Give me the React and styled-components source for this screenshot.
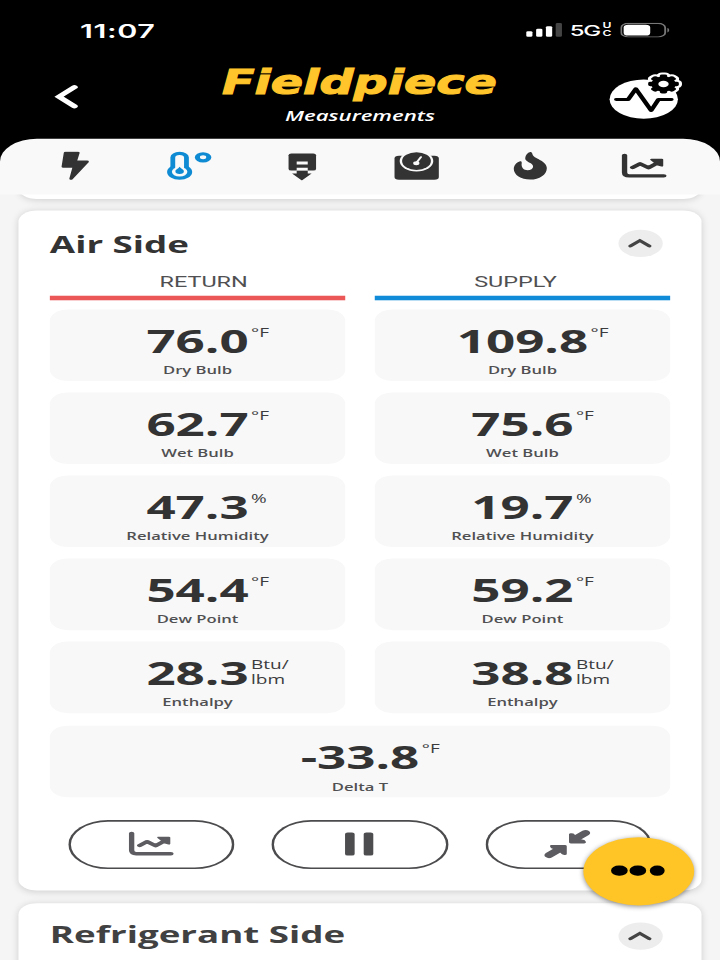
import React from "react";
import styled, { createGlobalStyle } from "styled-components";

const GlobalStyle = createGlobalStyle`
  body {
    margin: 0;
    background: #f5f5f5;
    overflow: hidden;
  }
  * {
    box-sizing: border-box;
  }
`;

const Viewport = styled.div`
  width: 720px;
  height: 960px;
  overflow: hidden;
`;

// phone layout is 390x844, stretched to fill the window
const Phone = styled.div`
  position: relative;
  width: 390px;
  height: 844px;
  overflow: hidden;
  background: #f5f5f5;
  color: #333334;
  font-family: "Open Sans", "Noto Sans", sans-serif;
  transform: scale(1.84615, 1.13744);
  transform-origin: 0 0;
`;

const Header = styled.header`
  height: 142px;
  background: #000;
  color: #fff;
`;

const StatusBar = styled.div`
  height: 52px;
  display: flex;
  justify-content: space-between;
  align-items: center;
  padding: 0 26.8px 0 43.4px;
`;

const Time = styled.span`
  padding-top: 1px;
  font-family: Inter, sans-serif;
  font-size: 16.5px;
  font-weight: 600;
  letter-spacing: 0.3px;
`;

const StatusIcons = styled.div`
  display: flex;
  align-items: center;
`;

const Network = styled.span`
  margin-left: 3.8px;
  padding-top: 1px;
  font-family: Inter, sans-serif;
  font-size: 13px;
  font-weight: 500;
  line-height: 16px;
  letter-spacing: -0.7px;
`;

const NetworkSub = styled.span`
  width: 5px;
  margin: 1px 4.8px 0 1.4px;
  font-family: Inter, sans-serif;
  font-size: 6.6px;
  font-weight: 600;
  line-height: 6.6px;
  white-space: pre-line;
`;

const NavRow = styled.div`
  height: 70px;
  display: grid;
  grid-template-columns: 82px 1fr 82px;
`;

const BackButton = styled.div`
  padding: 21px 0 0 28px;
`;

const Brand = styled.div`
  display: flex;
  flex-direction: column;
  align-items: center;
`;

const Logo = styled.div`
  height: 44px;
  padding-top: 4.4px;
  color: #ffc52b;
  font-family: "DejaVu Sans", sans-serif;
  font-size: 29px;
  font-weight: 700;
  font-style: italic;
  line-height: 34px;
  white-space: nowrap;
  -webkit-text-stroke: 0.9px #ffc52b;
  transform: scaleX(0.89);
`;

const Subtitle = styled.div`
  font-size: 12px;
  font-weight: 600;
  font-style: italic;
  line-height: 14px;
  margin-top: -1px;
`;

const LiveButton = styled.div`
  padding: 11px 0 0 21px;
`;

const TabBar = styled.nav`
  position: relative;
  z-index: 1;
  height: 48.6px;
  margin-top: -19.8px;
  padding: 0 10px 1.2px;
  display: flex;
  align-items: center;
  background: #f9f9f9;
  border-radius: 20px 20px 0 0;
`;

const Tab = styled.div`
  flex: 1;
  display: flex;
  justify-content: center;
  color: ${(props) => (props.$active ? "#0f8bd4" : "#333334")};
`;

const TabCard = styled.div`
  height: 20px;
  margin: -15.8px 10px 9.8px;
  background: #fff;
  border-radius: 10px;
  box-shadow: 0 1px 5px rgba(0, 0, 0, 0.15);
`;

const Card = styled.section`
  margin: 0 10px 10.8px;
  padding: 17px 17px 19px;
  background: #fff;
  border-radius: 10px;
  box-shadow: 0 1px 5px rgba(0, 0, 0, 0.15);
`;

const CardHeader = styled.div`
  height: 24px;
  display: flex;
  align-items: center;
  justify-content: space-between;
  padding-right: 4px;
`;

const CardTitle = styled.h2`
  margin: ${(props) => (props.$muted ? "-2px 0 0" : "1.4px 0 0")};
  font-size: 19.9px;
  font-weight: 700;
  line-height: 24px;
  color: ${(props) => (props.$muted ? "#414142" : "#333334")};
`;

const Collapse = styled.div`
  width: 24px;
  height: 24px;
  display: flex;
  align-items: center;
  justify-content: center;
  border-radius: 50%;
  background: #ededed;
`;

const Columns = styled.div`
  display: grid;
  grid-template-columns: 1fr 1fr;
  column-gap: 16px;
  row-gap: 9.7px;
`;

const ColumnHead = styled.div`
  margin-top: 15.4px;
  padding: ${(props) => (props.$side === "return" ? "0 0 0 6.6px" : "0 7.6px 0 0")};
  height: 18.4px;
  font-family: Roboto, sans-serif;
  font-size: 12.7px;
  line-height: 14.6px;
  text-align: center;
  color: #505052;
`;

const HeadRow = styled.div`
  display: grid;
  grid-template-columns: 1fr 1fr;
  column-gap: 16px;
  margin-bottom: 8.2px;
`;

const Bar = styled.div`
  height: 4.4px;
  background: ${(props) => props.$color};
`;

const Tile = styled.div`
  grid-column: ${(props) => (props.$wide ? "1 / -1" : "auto")};
  height: 63.3px;
  margin-top: ${(props) => (props.$wide ? "0.8px" : "0")};
  padding-top: 12.9px;
  background: #f8f8f8;
  border-radius: 10px;
`;

const Reading = styled.div`
  display: grid;
  grid-template-columns: 1fr auto 1fr;
  height: 28px;
`;

const Value = styled.span`
  grid-column: 2;
  font-size: 27.7px;
  font-weight: 700;
  line-height: 28px;
`;

const Unit = styled.span`
  padding: 1.1px 0 0 1.3px;
  font-size: 10.3px;
  font-weight: 500;
  line-height: 13.2px;
  white-space: pre-line;
  color: #3c3c3e;
`;

const Label = styled.div`
  margin-top: 7.4px;
  font-size: 9px;
  font-weight: 600;
  line-height: 12px;
  text-align: center;
  color: #505052;
`;

const Actions = styled.div`
  display: flex;
  gap: 20.1px;
  padding-left: 10.3px;
  margin-top: 19.5px;
`;

const ActionButton = styled.div`
  width: ${(props) => props.$width}px;
  height: 43.5px;
  display: flex;
  align-items: center;
  justify-content: center;
  padding-right: 0.8px;
  border-radius: 22px;
  box-shadow: inset 0 0 0 1.4px #4b4b4d;
  color: #5c5c61;
`;

const Fab = styled.div`
  position: absolute;
  left: 315.7px;
  top: 735.5px;
  z-index: 2;
  width: 60.5px;
  height: 60.5px;
  display: flex;
  align-items: center;
  justify-content: center;
  gap: 1.8px;
  padding-right: 0.4px;
  border-radius: 50%;
  background: #ffc527;
  box-shadow: 0 1px 4px rgba(0, 0, 0, 0.45);
`;

const Dot = styled.span`
  width: 8.5px;
  height: 8.8px;
  border-radius: 50%;
  background: #000;
`;

const SignalIcon = () => (
  <svg width="20" height="13" viewBox="0 0 20 13" fill="#fff">
    <rect x="0" y="7.4" width="3.4" height="4.9" rx="0.9" />
    <rect x="5.4" y="5.3" width="3.4" height="7" rx="0.9" />
    <rect x="10.7" y="3" width="3.4" height="9.3" rx="0.9" />
    <rect x="16" y="0.3" width="3.4" height="12" rx="0.9" fill="#444" />
  </svg>
);

const BatteryIcon = () => (
  <svg width="27" height="13" viewBox="0 0 27 13">
    <rect x="0.5" y="0.5" width="23.8" height="12" rx="3.8" fill="none" stroke="#777" />
    <rect x="1.8" y="1.7" width="14.4" height="9.6" rx="2.5" fill="#fff" />
    <path d="M25.5 4.7v3.8c1.3-.6 1.3-3.2 0-3.8z" fill="#777" />
  </svg>
);

const BackIcon = () => (
  <svg width="16" height="24" viewBox="0 0 16 24" fill="none">
    <path
      d="M12.3 3.6 4 12l8.3 8.4"
      stroke="#fff"
      strokeWidth="3.6"
      strokeLinecap="round"
      strokeLinejoin="miter"
    />
  </svg>
);

const Gear = ({ color, grow = 0 }) => (
  <g fill={color} stroke={color} strokeWidth={grow} strokeLinejoin="round">
    <circle cx="30.1" cy="10.8" r="6.6" />
    {[0, 45, 90, 135].map((angle) => (
      <rect
        key={angle}
        x="28.1"
        y="2.5"
        width="4"
        height="16.6"
        rx="1.2"
        transform={`rotate(${angle} 30.1 10.8)`}
      />
    ))}
  </g>
);

const LiveIcon = () => (
  <svg width="42" height="43" viewBox="-0.3 0 42 43">
    <ellipse cx="19.4" cy="24.2" rx="18.5" ry="17.3" fill="#fff" />
    <Gear color="#fff" grow={3.4} />
    <Gear color="#000" />
    <circle cx="30.1" cy="10.8" r="2.8" fill="#fff" />
    <path
      d="M4.6 24.4H11l4.1-9.3 8.3 19 4-9.700h6.900"
      fill="none"
      stroke="#000"
      strokeWidth="2.6"
      strokeLinecap="round"
      strokeLinejoin="round"
    />
  </svg>
);

const BoltIcon = () => (
  <svg width="30" height="26" viewBox="0.4 0 30 26">
    <path
      d="M9.9 1.4h6.7l-1.5 7.7h6.5l-8.7 15 1.8-10.6H8.7z"
      fill="currentColor"
      stroke="currentColor"
      strokeWidth="1.9"
      strokeLinejoin="round"
    />
  </svg>
);

const ThermometerIcon = () => (
  <svg width="30" height="26" viewBox="0.5 0 30 26" fill="currentColor">
    <rect x="4.8" y="0.5" width="10" height="19" rx="4.9" />
    <circle cx="9.8" cy="18.2" r="6.8" />
    <g fill="#f9f9f9">
      <rect x="7.4" y="3.3" width="4.8" height="15" rx="2.4" />
      <circle cx="9.8" cy="18" r="4.2" />
    </g>
    <path d="M9.8 13.6c.5 1.500 2.300 2.200 2.300 4a2.300 2.300 0 0 1-4.600 0c0-1.800 1.800-2.500 2.300-4z" />
    <circle cx="22.5" cy="5.3" r="3.1" fill="none" stroke="currentColor" strokeWidth="2.8" />
  </svg>
);

const SystemIcon = () => (
  <svg width="30" height="26" viewBox="0 0 30 26" fill="currentColor">
    <rect x="7.3" y="2" width="14.9" height="15" rx="1.5" />
    <path d="M11.7 9h6v2.7h-6zM11.7 14.4h6v2.8h-6z" fill="#f9f9f9" />
    <path d="M11.7 17.2h6v2.3h2.1l-5.3 6.1-5.3-6.1h2.5z" />
  </svg>
);

const GaugeIcon = () => (
  <svg width="30" height="26" viewBox="0.5 0 30 26" fill="currentColor">
    <rect x="3.2" y="4" width="24" height="21" rx="2.4" />
    <circle cx="15.1" cy="8.6" r="9.1" fill="#f9f9f9" />
    <circle cx="15.1" cy="8.6" r="7.8" />
    <path d="M17.5 5 15.3 9.6" stroke="#f9f9f9" strokeWidth="1.3" strokeLinecap="round" />
    <circle cx="15" cy="10.5" r="1.7" fill="#f9f9f9" />
  </svg>
);

const FlameIcon = () => (
  <svg width="30" height="26" viewBox="0.2 0 30 26" fill="currentColor">
    <path d="M14.4.7c.6-.2 1 .5 1.2 1.8.3 2.4 2 3.4 4 5.100 2.400 2 3.800 4.300 3.800 7.300 0 5.700-4 10-9 10s-8.900-4.200-8.900-9.300c0-3.300 1.500-5.700 3.100-6.600.8-.4 1.300.1 1.200 1.200-.2 2 0 3.500.7 4.900.9 1.800 3.200 2 4.600.6 1.300-1.400 1.100-3.400-.4-5.100-1.600-1.700-3.100-2.500-3-4.800.1-2.200 1.200-4.500 2.700-5.100z" />
  </svg>
);

const ChartIcon = () => (
  <svg width="30" height="26" viewBox="0 0 30 26" fill="none" stroke="currentColor">
    <path
      d="M4.3 3.6V18.6q0 3 2.5 3H25.6"
      strokeWidth="2.9"
      strokeLinecap="round"
      strokeLinejoin="round"
    />
    <path
      d="M8.7 14.3l4-3.4 4.6 3.600 5-4.400"
      strokeWidth="2.9"
      strokeLinecap="round"
      strokeLinejoin="round"
    />
    <path
      d="M18.9 7.3h5.6v5.4l-2-.8z"
      fill="currentColor"
      strokeWidth="1.5"
      strokeLinejoin="round"
    />
  </svg>
);

const PauseIcon = () => (
  <svg width="16" height="22" viewBox="0.4 0 16 22" overflow="visible" fill="#4d4d50">
    <rect x="0.3" y="0.8" width="5.2" height="20.3" rx="1.4" />
    <rect x="10.4" y="0.8" width="5.2" height="20.3" rx="1.4" />
  </svg>
);

const CompressIcon = () => (
  <svg width="26" height="26" viewBox="-0.3 0 26 26" fill="currentColor" stroke="currentColor">
    <path d="M22.9 3.300l-5.400 5M3.100 22.800l5.400-5" strokeWidth="5" strokeLinecap="round" />
    <path
      d="M14.900 4.500v7h7.200l-.4-1-2.200-1-2.400-2.400-1.200-2.300zM11.700 14.900v6.800l-.9-.3-1.200-2-2.600-2.400-2-1-.4-1.100z"
      strokeWidth="2"
      strokeLinejoin="round"
    />
  </svg>
);

const ChevronUp = () => (
  <svg width="14" height="10" viewBox="0 0 14 10" fill="none">
    <path
      d="M1.5 7.3 6.6 2.5l5.1 4.8"
      stroke="#444"
      strokeWidth="2.4"
      strokeLinecap="round"
    />
  </svg>
);

const tabs = [
  { id: "electric", Icon: BoltIcon },
  { id: "temperature", Icon: ThermometerIcon },
  { id: "system", Icon: SystemIcon },
  { id: "gauge", Icon: GaugeIcon },
  { id: "combustion", Icon: FlameIcon },
  { id: "chart", Icon: ChartIcon },
];

const readings = [
  { label: "Dry Bulb", unit: "°F", values: ["76.0", "109.8"] },
  { label: "Wet Bulb", unit: "°F", values: ["62.7", "75.6"] },
  { label: "Relative Humidity", unit: "%", values: ["47.3", "19.7"] },
  { label: "Dew Point", unit: "°F", values: ["54.4", "59.2"] },
  { label: "Enthalpy", unit: "Btu/\nlbm", values: ["28.3", "38.8"] },
];

const Measurement = ({ value, unit, label, wide }) => (
  <Tile $wide={wide}>
    <Reading>
      <Value>{value}</Value>
      <Unit>{unit}</Unit>
    </Reading>
    <Label>{label}</Label>
  </Tile>
);

const SectionHeader = ({ title, muted }) => (
  <CardHeader>
    <CardTitle $muted={muted}>{title}</CardTitle>
    <Collapse>
      <ChevronUp />
    </Collapse>
  </CardHeader>
);

function App() {
  return (
    <Viewport>
      <GlobalStyle />
      <Phone>
        <Header>
          <StatusBar>
            <Time>11:07</Time>
            <StatusIcons>
              <SignalIcon />
              <Network>5G</Network>
              <NetworkSub>{"U\nC"}</NetworkSub>
              <BatteryIcon />
            </StatusIcons>
          </StatusBar>
          <NavRow>
            <BackButton>
              <BackIcon />
            </BackButton>
            <Brand>
              <Logo>Fieldpiece</Logo>
              <Subtitle>Measurements</Subtitle>
            </Brand>
            <LiveButton>
              <LiveIcon />
            </LiveButton>
          </NavRow>
        </Header>
        <TabBar>
          {tabs.map(({ id, Icon }) => (
            <Tab key={id} $active={id === "temperature"}>
              <Icon />
            </Tab>
          ))}
        </TabBar>
        <TabCard />
        <Card>
          <SectionHeader title="Air Side" />
          <HeadRow>
            <ColumnHead $side="return">RETURN</ColumnHead>
            <ColumnHead $side="supply">SUPPLY</ColumnHead>
            <Bar $color="#eb5757" />
            <Bar $color="#0f8bd8" />
          </HeadRow>
          <Columns>
            {readings.map(({ label, unit, values }) =>
              values.map((value) => (
                <Measurement key={label + value} value={value} unit={unit} label={label} />
              ))
            )}
            <Measurement value="-33.8" unit="°F" label="Delta T" wide />
          </Columns>
          <Actions>
            <ActionButton $width={89.8}>
              <ChartIcon />
            </ActionButton>
            <ActionButton $width={95.6}>
              <PauseIcon />
            </ActionButton>
            <ActionButton $width={89.8}>
              <CompressIcon />
            </ActionButton>
          </Actions>
        </Card>
        <Card>
          <SectionHeader title="Refrigerant Side" muted />
          <HeadRow />
        </Card>
        <Fab>
          <Dot />
          <Dot />
          <Dot />
        </Fab>
      </Phone>
    </Viewport>
  );
}

export default App;
